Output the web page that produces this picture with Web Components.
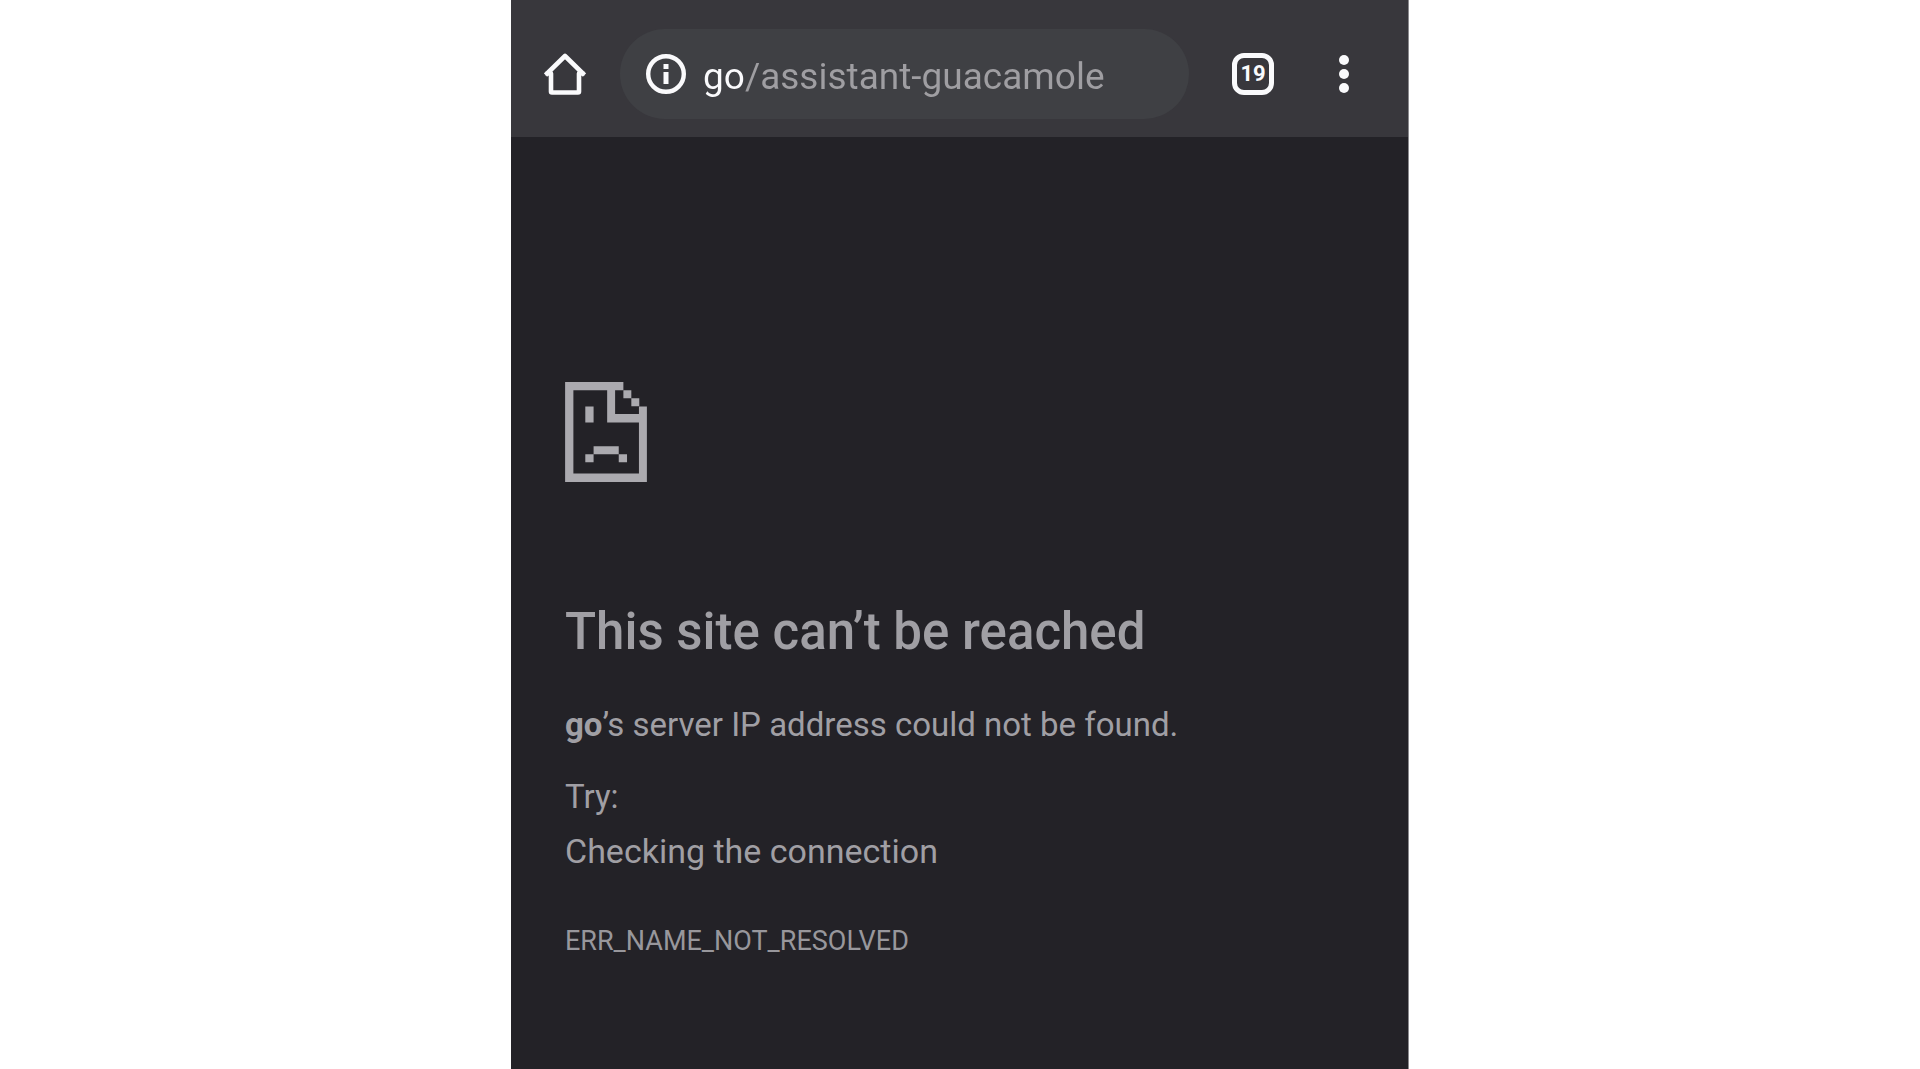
<!DOCTYPE html>
<html lang="en">
<head>
<meta charset="utf-8">
<meta name="viewport" content="width=device-width, initial-scale=1">
<title>go/assistant-guacamole</title>
<style>
  body { margin: 0; background: #fff; font-family: Roboto, sans-serif; }
</style>
</head>
<body>
<mobile-browser>
  <browser-toolbar slot="toolbar">
    <icon-button slot="start" label="Home">
      <svg width="42" height="42" viewBox="0 0 42 42" fill="none" stroke="#fafafc" stroke-width="4.600" stroke-linejoin="round"><path d="M1.500 22 21 3l19.500 19M1.500 20.500H7V38.500q0 1 1 1h26q1 0 1-1V20.500h5.500"/></svg>
    </icon-button>
    <address-bar url="go/assistant-guacamole"></address-bar>
    <tab-counter slot="end" count="19"></tab-counter>
    <icon-button slot="end" label="More options">
      <svg width="42" height="42" viewBox="0 0 42 42" fill="#fafafc"><circle cx="21" cy="7" r="5"/><circle cx="21" cy="21" r="5"/><circle cx="21" cy="35" r="5"/></svg>
    </icon-button>
  </browser-toolbar>
  <error-page code="ERR_NAME_NOT_RESOLVED">
    <span slot="title">This site can’t be reached</span>
    <span slot="summary"><strong>go</strong>’s server IP address could not be found.</span>
    <span slot="suggestion">Checking the connection</span>
  </error-page>
</mobile-browser>
<script>
class Base extends HTMLElement {
  connectedCallback() {
    if (!this.shadowRoot) this.attachShadow({ mode: "open" }).innerHTML = this.render();
  }
}

customElements.define("mobile-browser", class extends Base {
  render() {
    return `<style>
      :host { display: flex; flex-direction: column; box-sizing: border-box; width: 100%; max-width: 898px;
        min-height: 100vh; margin: 0 auto; background: #232227; border-right: 1px solid #8b8a8e; }
    </style><slot name="toolbar"></slot><slot></slot>`;
  }
});

customElements.define("browser-toolbar", class extends Base {
  render() {
    return `<style>
      :host { display: block; background: #38373c; }
      header { display: flex; align-items: center; gap: 34px; padding: 29px 43px 18px 33px; }
      ::slotted(address-bar) { flex: 1; min-width: 0; }
      .end { display: flex; gap: 49px; padding-left: 9px; }
    </style><header><slot name="start"></slot><slot></slot><div class="end"><slot name="end"></slot></div></header>`;
  }
});

customElements.define("icon-button", class extends Base {
  render() {
    return `<style>
      :host { display: block; }
      button { display: flex; padding: 0; border: 0; background: none; cursor: pointer; }
    </style><button type="button" aria-label="${this.getAttribute("label")}"><slot></slot></button>`;
  }
});

customElements.define("tab-counter", class extends Base {
  render() {
    const count = this.getAttribute("count");
    return `<style>
      :host { display: block; }
      button { display: flex; align-items: center; justify-content: center; box-sizing: border-box;
        width: 42px; height: 42px; padding: 0; border: 5px solid #fafafc; border-radius: 12px;
        background: none; color: #fafafc; font: 700 22px/24px Roboto, sans-serif; cursor: pointer; }
    </style><button type="button" title="Open tabs">${count}</button>`;
  }
});

customElements.define("address-bar", class extends Base {
  render() {
    return `<style>
      :host { display: block; }
      form { display: flex; align-items: center; gap: 16px; box-sizing: border-box; height: 90px;
        padding: 0 25px; border-radius: 45px; background: #3f4044; }
      svg { flex: none; }
      /* The host name is bright and the path is dimmed, split at the width of the host. */
      input { flex: 1; min-width: 0; box-sizing: border-box; height: 52px; padding: 4px 0 0; border: 0; outline: 0;
        font: 400 37px/48px Roboto, sans-serif; color: #9f9ea2; -webkit-text-fill-color: transparent;
        background: linear-gradient(90deg, #fafafc 42px, #9f9ea2 42px); -webkit-background-clip: text; background-clip: text; }
    </style>
    <form>
      <svg width="42" height="42" viewBox="0 0 42 42" aria-hidden="true"><circle cx="21" cy="21" r="17.800" fill="none" stroke="#fafafc" stroke-width="4.400"/><path fill="#fafafc" d="M18.500 11h5v5h-5zM18.500 19h5v12h-5z"/></svg>
      <input type="text" aria-label="Address" spellcheck="false" value="${this.getAttribute("url")}">
    </form>`;
  }
});

customElements.define("error-page", class extends Base {
  render() {
    return `<style>
      :host { display: block; padding: 245px 54px 60px; color: #a09fa4; font-size: 33px; line-height: 54px; }
      svg { display: block; margin-bottom: 120px; }
      h1 { margin: 0 0 36px; font-size: 51px; line-height: 60px; font-weight: 500; }
      p { margin: 0; }
      .summary { margin-bottom: 18px; }
      ul { margin: 0 0 39px; padding: 0; list-style: none; font-size: 34px; }
      .code { font-size: 27px; line-height: 48px; color: #98979c; }
    </style>
    <main>
      <svg width="82" height="100" viewBox="76 66 247 302" fill="#abaaaf" aria-hidden="true">
        <path fill-rule="evenodd" d="M76 66H252V91H227V163H299V140H323V368H76ZM101 91V342H299V188H203V91Z"/>
        <path d="M252 91h24v24h-24zM276 115h24v24h-24zM137 140h25v48h-25zM162 260h76v24h-76zM137 284h25v24h-25zM238 284h25v24h-25z"/>
      </svg>
      <h1><slot name="title"></slot></h1>
      <p class="summary"><slot name="summary"></slot></p>
      <p>Try:</p>
      <ul><li><slot name="suggestion"></slot></li></ul>
      <p class="code">${this.getAttribute("code")}</p>
    </main>`;
  }
});
</script>
</body>
</html>
